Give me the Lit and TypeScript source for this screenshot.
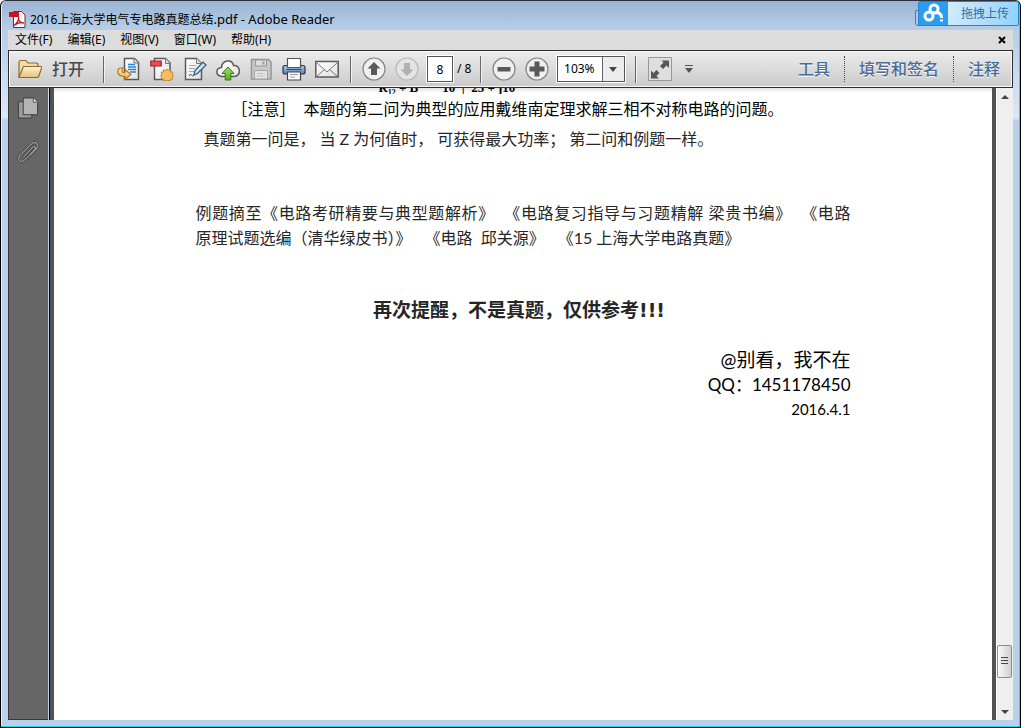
import { LitElement, html, css, svg } from "lit";
import { customElement, property } from "lit/decorators.js";
import { styleMap } from "lit/directives/style-map.js";

const page = svg`<path d="M7.5 1.5h10l4 4v17h-14z" fill="url(#paper)" stroke="#5b5b5b" stroke-width="1.5"/><path d="M17 1.5v4.500h4.500" fill="#ddd" stroke="#777"/>`;

const defs = svg`<defs>
  <linearGradient id="paper" x1="0" y1="0" x2="1" y2="1"><stop offset="0" stop-color="#fff"/><stop offset="1" stop-color="#e2e2e2"/></linearGradient>
  <linearGradient id="gold" x1="0" y1="0" x2="0" y2="1"><stop offset="0" stop-color="#fff0bd"/><stop offset="1" stop-color="#e2b04a"/></linearGradient>
  <linearGradient id="fold" x1="0" y1="0" x2="0" y2="1"><stop offset="0" stop-color="#fff3cd"/><stop offset="1" stop-color="#e3c37b"/></linearGradient>
  <linearGradient id="blue" x1="0" y1="0" x2="0" y2="1"><stop offset="0" stop-color="#a9c8ea"/><stop offset="1" stop-color="#5b84b6"/></linearGradient>
  <linearGradient id="green" x1="0" y1="0" x2="0" y2="1"><stop offset="0" stop-color="#9fe05f"/><stop offset="1" stop-color="#57ab27"/></linearGradient>
</defs>`;

const icons: Record<string, unknown> = {
  folder: svg`<path d="M1.500 20V5q0-1.500 1.500-1.500h5.500l2 2.500H19q1.500 0 1.500 1.500V10" fill="#f2dca4" stroke="#8a6c35" stroke-width="1.200"/><path d="M1.500 20.500 5.500 10.500q.4-1 1.500-1h16.500q1 0 .7 1l-3 9q-.3 1-1.400 1z" fill="url(#fold)" stroke="#8a6c35" stroke-width="1.200"/>`,
  convert: svg`${page}<path d="M11 7.500h7M11 10h8M11 12.500h8M13 15h6" stroke="#2f86d8" stroke-width="1.300"/><path d="M3.500 11Q.5 11.500.8 15.500 2 19.500 8 19.500v3l6-5-6-5v3Q5 16 5 14q-.2-2 .8-3z" fill="url(#gold)" stroke="#b0721c" stroke-width="1.100"/>`,
  create: svg`<path d="M4.500 1.500h11l4.500 4.500v16.500h-15.500z" fill="url(#paper)" stroke="#5b5b5b" stroke-width="1.500"/><path d="M15.500 1.500v5h4.500" fill="#ddd" stroke="#777"/><path d="M.8 4h10.400v5H.8z" fill="#ea4b57" stroke="#a81f2c" stroke-width="1.200"/><path d="m17 12 1.300 1.500 2-.7.4 2.100 2.200.4-.8 2 1.500 1.300-1.500 1.400.8 1.900-2.200.4-.4 1.300-2-.2-1.300.6-1.300-.6-2 .2-.4-1.300-2.200-.4.8-1.900-1.500-1.400 1.500-1.300-.8-2 2.200-.4.4-2.100 2 .7z" fill="#f3be62" stroke="#b67a22" stroke-width=".8"/>`,
  sign: svg`<path d="M2.500 1.500h11l5 5v16h-16z" fill="url(#paper)" stroke="#5b5b5b" stroke-width="1.500"/><path d="M13.500 1.500v5h5" fill="#ddd" stroke="#777"/><path d="M6 8.500h7M6 11.500h6M6 14.500h5" stroke="#aaa"/><path d="m11 18 1-4.500L20 5l3 3-8.500 8.500z" fill="#cfe0ef" stroke="#33587a" stroke-width="1.200"/><path d="M6 19q1.500-3 2.500-1t2.500 0" fill="none" stroke="#444"/>`,
  cloud: svg`<path d="M6 19.500C-1 19-.5 10.500 5.500 10.500 6 3 16 1.500 17.500 8.500c7-1 8.500 10.500.5 11z" fill="url(#paper)" stroke="#5b5b5b" stroke-width="1.500"/><path d="m12 10 6 6.500h-3.200V23H9.200v-6.500H6z" fill="url(#green)" stroke="#347a17"/>`,
  save: svg`<path d="M2.500 2.500h17l2.500 2.500v17h-19.500z" fill="#c9c9c9" stroke="#969696" stroke-width="1.500"/><path d="M6.500 3h11v6h-11z" fill="#ddd" stroke="#999"/><path d="M13.500 4.500h2v3h-2z" fill="#999"/><path d="M5.500 13.500h13V22h-13z" fill="#e3e3e3" stroke="#a5a5a5"/><path d="M8.500 16.500h7m-7 2.500h7" stroke="#b0b0b0" stroke-dasharray="2 1"/>`,
  print: svg`<path d="M1 10.500Q1 8.500 3 8.500h18q2 0 2 2V15q0 2-2 2H3q-2 0-2-2z" fill="url(#blue)" stroke="#333" stroke-width="1.200"/><path d="M5.500 1.500h13v9h-13z" fill="#fff" stroke="#555" stroke-width="1.200"/><path d="M4.500 12.500h15" stroke="#2c4a6d" stroke-width="1.200"/><path d="M5.500 15h13v8h-13z" fill="#fff" stroke="#444" stroke-width="1.200"/><path d="M8 17.500h8m-8 2.500h5" stroke="#999"/>`,
  mail: svg`<path d="M.8 4.500h22.400v15.500H.8z" fill="url(#paper)" stroke="#5b5b5b" stroke-width="1.500"/><path d="m2 6 10 9L22 6M2 19l7.500-6.500m5 0L22 19" fill="none" stroke="#777"/>`,
  up: svg`<circle cx="12" cy="12" r="11" fill="#f0f0f0" stroke="#858585" stroke-width="1.200"/><path d="m12 5 6.500 6.500H15V18H9v-6.500H5.500z" fill="#5a5a5a"/>`,
  down: svg`<circle cx="12" cy="12" r="11" fill="#e4e4e4" stroke="#b9b9b9" stroke-width="1.200"/><path d="m12 19-6.500-6.500H9V6h6v6.500h3.500z" fill="#b0b0b0"/>`,
  minus: svg`<circle cx="12" cy="12" r="11" fill="#f0f0f0" stroke="#858585" stroke-width="1.200"/><path d="M5.500 10h13v4.500h-13z" fill="#5a5a5a"/>`,
  plus: svg`<circle cx="12" cy="12" r="11" fill="#f0f0f0" stroke="#858585" stroke-width="1.200"/><path d="M9.500 4.500h5v5h5v5h-5v5h-5v-5h-5v-5h5z" fill="#5a5a5a"/>`,
  expand: svg`<path d="M.5.500h23v23H.5z" fill="#dedede" stroke="#999"/><path d="M13.500 3.500h7.500V11l-2.500-2.500-3.500 3.500-3-3 3.500-3.500zM3 13.500l2.500 2.500 3-3 3 3-3 3 2.500 2.500H3z" fill="#565656"/>`,
  pages: svg`<path d="M1.500 5.500h14v17h-14z" fill="#9b9b9b" stroke="#3c3c3c"/><path d="M6.500 1.500h10.500l4.500 4.500v13h-15z" fill="#b4b4b4" stroke="#3c3c3c"/><path d="M17 1.500v4.500h4.500" fill="#ddd" stroke="#555"/>`,
  clip: svg`<path d="m7.500 16.500 9-9.500q2-1.500 2.500 0t-1 3l-9.500 10Q5 23 2.800 21T3 15.500L14 4.500q3-3 5.500-2t1.500 5l-6.500 7" fill="none" stroke="#404040" stroke-width="2.800"/><path d="m7.500 16.500 9-9.500q2-1.500 2.500 0t-1 3l-9.500 10Q5 23 2.800 21T3 15.500L14 4.500q3-3 5.500-2t1.500 5l-6.500 7" fill="none" stroke="#a0a0a0" stroke-width="1.200"/>`,
};

@customElement("pdf-icon")
export class PdfIcon extends LitElement {
  static styles = css`:host { display: block; width: 24px; height: 24px; } svg { display: block; width: 100%; height: 100%; }`;
  @property() name = "";
  render() {
    return html`<svg viewBox="0 0 24 24" aria-hidden="true">${defs}${icons[this.name]}</svg>`;
  }
}

@customElement("app-root")
export class AppRoot extends LitElement {
  static styles = css`
    :host { display: block; font: 12px/20px "Noto Sans", "Noto Sans CJK SC", sans-serif; color: #000; }
    * { box-sizing: border-box; }
    button, input, select { font: inherit; color: inherit; margin: 0; padding: 0; border: 0; background: none; border-radius: 0; }
    a { color: inherit; text-decoration: none; }
    .window { position: relative; height: 100vh; min-height: 400px; display: flex; flex-direction: column; overflow: hidden; padding: 0 7px 7px 7px; border: 1px solid #000; border-top-color: #2b2f3a; border-radius: 6px 6px 0 0; box-shadow: inset -1px -1px 0 #27d3ee, inset 1px 0 0 #e6f0fa; background: linear-gradient(#9ab4d2, #b4cce7 26px, #bdd4ed 50px, #dbe8f7 116px, #b9d1ea 120px); }
    .title { height: 29px; flex: none; display: flex; align-items: center; gap: 4px; padding: 7px 0 0 1px; }
    .title h1 { margin: 0; font: inherit; }
    .title .app { font-size: 13px; }
    .logo { width: 17px; height: 17px; }
    .winbtns { position: absolute; top: 9px; right: 9px; display: flex; }
    .winbtns button { width: 32px; height: 16px; border: 1px solid #63768e; border-radius: 0 0 3px 3px; background: #b4c8df; }
    .winbtns .close { background: #a8303a; border-color: #5d1626; }
    .upload { position: absolute; top: 0; right: 1px; height: 25px; width: 101px; display: flex; align-items: center; border: 1px solid #1b87d6; border-radius: 2px; background: linear-gradient(100deg, #eaf6ff, #b7e0fb 60%, #8fd4fa); color: #3c6a9b; }
    .upload svg { width: 29px; height: 23px; background: #2a9df0; margin-right: 13px; }
    .menu { height: 20px; flex: none; display: flex; align-items: center; background: #dcdcdc; padding: 0 7px; gap: 15px; }
    .menu button { height: 20px; }
    .menu .x { margin-left: auto; width: 8px; height: 8px; }
    .menu .x svg, .logo { display: block; }
    .bar { height: 38px; flex: none; display: flex; align-items: center; border: 1px solid #2d2d2d; box-shadow: inset 0 0 0 1px #f8f8f8; background: linear-gradient(#ececec, #cacaca); font-size: 16px; }
    .open { display: flex; align-items: center; gap: 10px; margin-left: 8px; color: #484848; font-weight: 500; }
    .open pdf-icon { width: 25px; }
    .tool { width: 33px; height: 32px; display: grid; place-items: center; }
    .sep { width: 1px; height: 27px; background: #666; box-shadow: 1px 0 0 #f2f2f2; margin: 0 6px 0 7px; }
    .sep.first { margin: 0 8px 0 19px; }
    .sep.zoom { margin: 0 12px 0 10px; }
    .pageno { width: 26px; height: 26px; margin-left: 4px; border: 1px solid #555; background: #fff; text-align: center; font-size: 12px; box-shadow: 0 0 0 1px #fff; }
    .total { font-size: 12px; width: 16px; margin-left: 4px; white-space: nowrap; }
    .combo { display: grid; grid-template-columns: 1fr 22px; width: 68px; height: 26px; margin-left: 4px; border: 1px solid #555; background: linear-gradient(90deg, #fff 44px, #666 44px 45px, #ececec 45px); box-shadow: 0 0 0 1px #fff; }
    .combo select { grid-area: 1 / 1 / 2 / 3; appearance: none; padding-left: 6px; font-size: 12px; outline: none; }
    .combo svg { grid-area: 1 / 2; width: 8px; height: 5px; place-self: center; pointer-events: none; }
    .more { width: 10px; height: 10px; margin-left: 12px; }
    .more svg { display: block; }
    .panels { margin-left: auto; display: flex; align-items: center; color: #4a6c95; font-weight: 500; padding-right: 12px; }
    .panels a { text-shadow: 0 1px 0 #fff; }
    .panels a + a { border-left: 1px dotted #444; margin-left: 14px; padding: 3px 0 3px 14px; }
    .body { flex: 1; min-height: 0; display: flex; }
    .side { width: 40px; flex: none; background: #666; border: solid #383838; border-width: 0 0 1px 1px; display: flex; flex-direction: column; align-items: center; gap: 20px; padding-top: 8px; }
    .side pdf-icon { width: 23px; }
    .doc { flex: 1; min-width: 0; overflow: hidden; border: solid #525252; border-width: 0 4px; box-shadow: -1px 0 0 #000; margin-left: 2px; background: linear-gradient(#e4e4e4, #fff 5px); color: #262626; }
    .sheet { width: 70%; max-width: 655px; margin: 0 auto; font: 16px/25px Lato, "Noto Sans CJK SC", sans-serif; }
    .sheet p, .sheet h2 { margin: 0; }
    .formula { height: 6px; overflow: hidden; display: flex; align-items: flex-end; gap: 24px; padding-left: 183px; font: bold 13px/13px "Liberation Serif", serif; color: #000; white-space: pre; }
    .sheet .note { display: flex; gap: 8px; padding: 2px 0 0 36px; color: #000; white-space: nowrap; font-family: "Noto Sans CJK SC", sans-serif; }
    .sheet .first { display: flex; gap: 4px; padding: 5px 0 0 8px; white-space: nowrap; }
    .sheet .source { margin-top: 49px; }
    .source .full { display: block; text-align: justify; text-align-last: justify; }
    .source .rest { display: flex; flex-wrap: wrap; column-gap: 13px; }
    .sheet h2 { margin-top: 48px; font: 700 19px/25px "DejaVu Sans", "Noto Sans CJK SC", sans-serif; text-align: center; padding-right: 8px; }
    .sign { margin-top: 24px; text-align: right; font-size: 19px; color: #000; }
    .sign .qq { font-size: 17px; }
    .sign .date { font-size: 15px; }
    .scroll { width: 17px; flex: none; display: flex; flex-direction: column; background: #efefef; border-left: 1px solid #fff; }
    .scroll button { height: 17px; flex: none; display: grid; place-items: center; }
    .scroll .thumb { height: 33px; width: 15px; border: 1px solid #8c8c8c; border-radius: 2px; background: linear-gradient(90deg, #fafafa, #cfcfcf); }
  `;

  private tools = [
    ["convert", "转换"], ["create", "创建 PDF"], ["sign", "签名"], ["cloud", "上传"],
    ["save", "保存"], ["print", "打印"], ["mail", "电子邮件"],
  ];

  private tool([icon, label]: string[]) {
    return html`<button class="tool" aria-label=${label}><pdf-icon name=${icon}></pdf-icon></button>`;
  }

  render() {
    const scrolled = 95.5;
    return html`<div class="window">
      <header class="title">
        <svg class="logo" viewBox="0 0 17 17"><path d="M4.500.500h8l3.500 3.500v12.500H4.500z" fill="#fff" stroke="#8b2020"/><path d="M0 1h10v5H0z" fill="#c8161d"/><path d="M5 14.500c4-3 5-6 4.500-9C9 9 11 12 15 12c-4-1-7 0-10 2.500" fill="none" stroke="#c8161d" stroke-width="1.300"/></svg>
        <h1>2016上海大学电气专电路真题总结<span class="app">.pdf - Adobe Reader</span></h1>
      </header>
      <div class="winbtns"><button aria-label="最小化"></button><button aria-label="最大化"></button><button class="close" aria-label="关闭"></button></div>
      <button class="upload"><svg viewBox="0 0 29 23" fill="none" stroke="#fff" stroke-width="3"><circle cx="15" cy="7" r="4"/><circle cx="10" cy="14" r="4"/><path d="M16.500 11q6-1 6 5"/><path d="M22.500 17.500v2"/></svg>拖拽上传</button>
      <nav class="menu">
        ${["文件(F)", "编辑(E)", "视图(V)", "窗口(W)", "帮助(H)"].map((m) => html`<button>${m}</button>`)}
        <button class="x" aria-label="关闭文档"><svg viewBox="0 0 8 8" width="8" height="8"><path d="m1 1 6 6m0-6-6 6" stroke="#000" stroke-width="2"/></svg></button>
      </nav>
      <div class="bar">
        <button class="open"><pdf-icon name="folder"></pdf-icon>打开</button>
        <span class="sep first"></span>
        ${this.tools.map((t) => this.tool(t))}
        <span class="sep"></span>
        ${this.tool(["up", "上一页"])}${this.tool(["down", "下一页"])}
        <input class="pageno" aria-label="页码" value="8" /><span class="total">/ 8</span>
        <span class="sep"></span>
        ${this.tool(["minus", "缩小"])}${this.tool(["plus", "放大"])}
        <div class="combo"><select aria-label="缩放"><option>103%</option></select><svg viewBox="0 0 8 5"><path d="M0 0h8L4 5z" fill="#444"/></svg></div>
        <span class="sep zoom"></span>
        <button aria-label="全屏"><pdf-icon name="expand"></pdf-icon></button>
        <button class="more" aria-label="更多"><svg viewBox="0 0 10 10" width="10" height="10"><path d="M1 1.500h8" stroke="#555"/><path d="M1 4h8L5 9z" fill="#555"/></svg></button>
        <nav class="panels"><a href="#">工具</a><a href="#">填写和签名</a><a href="#">注释</a></nav>
      </div>
      <div class="body">
        <aside class="side">
          <button aria-label="页面缩略图"><pdf-icon name="pages"></pdf-icon></button>
          <button aria-label="附件"><pdf-icon name="clip"></pdf-icon></button>
        </aside>
        <main class="doc"><article class="sheet">
          <div class="formula"><span>R₁₂ + B</span><span>10  |  25 + j10</span></div>
          <p class="note"><span>［注意］</span><span>本题的第二问为典型的应用戴维南定理求解三相不对称电路的问题。</span></p>
          <p class="first"><span>真题第一问是，</span><span>当 Z 为何值时，</span><span>可获得最大功率；</span><span>第二问和例题一样。</span></p>
          <p class="source">
            <span class="full">例题摘至《电路考研精要与典型题解析》&nbsp; 《电路复习指导与习题精解 梁贵书编》&nbsp; 《电路</span>
            <span class="rest"><span>原理试题选编（清华绿皮书）》</span><span>《电路&nbsp; 邱关源》</span><span>《15 上海大学电路真题》</span></span>
          </p>
          <h2>再次提醒，不是真题，仅供参考!!!</h2>
          <div class="sign"><p>@别看，我不在</p><p class="qq">QQ：1451178450</p><p class="date">2016.4.1</p></div>
        </article></main>
        <div class="scroll">
          <button aria-label="向上滚动"><svg width="8" height="4" viewBox="0 0 8 4"><path d="M0 4h8L4 0z" fill="#444"/></svg></button>
          <span style=${styleMap({ flexGrow: String(scrolled) })}></span>
          <button class="thumb" aria-label="滚动条"><svg width="7" height="8" viewBox="0 0 7 8"><path d="M0 .500h7M0 3.500h7M0 6.500h7" stroke="#444"/></svg></button>
          <span style=${styleMap({ flexGrow: String(100 - scrolled) })}></span>
          <button aria-label="向下滚动"><svg width="8" height="4" viewBox="0 0 8 4"><path d="M0 0h8L4 4z" fill="#444"/></svg></button>
        </div>
      </div>
    </div>`;
  }
}
